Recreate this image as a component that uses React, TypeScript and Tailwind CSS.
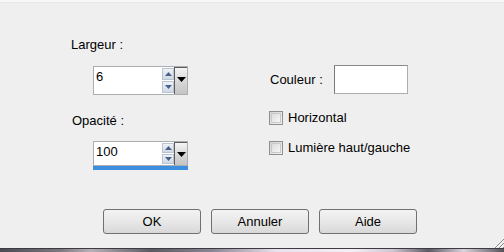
import React from "react";

const font = { fontFamily: '"Liberation Sans", Arial, sans-serif' };

function SpinBox({ value, focused }: { value: string; focused?: boolean }) {
  return (
    <div className="ml-[22px] flex h-[29px] w-[95px] flex-col">
      <div className="flex flex-1 items-stretch border border-[#abadb3] bg-white">
        <div className="flex-1 pl-[2px] pt-[2px] text-[13px] leading-[15px] text-black">{value}</div>
        {/* spinner arrows */}
        <div className="flex w-[12px] flex-col gap-[1px] py-[1px]">
          <div className="flex flex-1 items-center justify-center border border-[#b9c3d1] bg-gradient-to-b from-[#eef2f7] to-[#cfd8e4]">
            <svg width="7" height="4" viewBox="0 0 7 4">
              <path d="M0 4 L3.5 0 L7 4 Z" fill="#4b6089" />
            </svg>
          </div>
          <div className="flex flex-1 items-center justify-center border border-[#b9c3d1] bg-gradient-to-b from-[#eef2f7] to-[#cfd8e4]">
            <svg width="7" height="4" viewBox="0 0 7 4">
              <path d="M0 0 L7 0 L3.5 4 Z" fill="#4b6089" />
            </svg>
          </div>
        </div>
        {/* dropdown button */}
        <div className="flex w-[13px] flex-col items-center border-l border-t border-[#5e5e5e] bg-gradient-to-b from-[#f4f4f4] via-[#d9d9d9] to-[#c4c4c4] pt-[9px]">
          <svg width="9" height="5" viewBox="0 0 9 5">
            <path d="M0 0 L9 0 L4.5 5 Z" fill="#000" />
          </svg>
        </div>
      </div>
      {focused && <div className="h-[4px] bg-[#3c8fde]" />}
    </div>
  );
}

function CheckRow({ label }: { label: string }) {
  return (
    <div className="flex items-center">
      <div className="h-[14px] w-[14px] border border-[#8e8f8f] bg-gradient-to-br from-[#d4d4d4] to-[#f4f4f4] p-[1px]">
        <div className="h-full w-full border border-[#c9c9c9] bg-gradient-to-br from-[#dcdcdc] to-[#f7f7f7]" />
      </div>
      <span className="ml-[5px] text-[13px] leading-[15px] text-black">{label}</span>
    </div>
  );
}

function Btn({ label, w }: { label: string; w: string }) {
  return (
    <div
      className={`${w} flex h-[25px] items-center justify-center rounded-[3px] border border-[#707070] bg-gradient-to-b from-[#f3f3f3] via-[#e8e8e8] to-[#d8d8d8] text-[13px] text-black`}
    >
      {label}
    </div>
  );
}

export default function App() {
  return (
    <div style={font} className="relative flex h-[252px] w-[504px] flex-col overflow-hidden bg-[#efefef]">
      <div className="h-[3px] border-b border-[#e8e8e8] bg-[#f7f7f7]" />

      <div className="flex items-start pl-[71px] pt-[34px]">
        {/* left column */}
        <div className="flex w-[117px] flex-col">
          <span className="h-[15px] text-[13px] leading-[15px] text-black">Largeur :</span>
          <div className="mt-[14px]">
            <SpinBox value="6" />
          </div>
          <span className="mt-[18px] h-[15px] pl-[1px] text-[13px] leading-[15px] text-black">Opacité :</span>
          <div className="mt-[13px]">
            <SpinBox value="100" focused />
          </div>
        </div>

        {/* right column */}
        <div className="ml-[81px] mt-[28px] flex flex-col">
          <div className="flex items-center">
            <span className="w-[65px] pl-[1px] text-[13px] leading-[15px] text-black">Couleur :</span>
            <div className="h-[29px] w-[74px] border border-[#abadb3] border-l-[#7a7a7a] border-t-[#8a8a8a] bg-white" />
          </div>
          <div className="mt-[16px]">
            <CheckRow label="Horizontal" />
          </div>
          <div className="mt-[15px]">
            <CheckRow label="Lumière haut/gauche" />
          </div>
        </div>
      </div>

      <div className="mt-auto flex gap-[10px] pb-[14px] pl-[103px]">
        <Btn label="OK" w="w-[98px]" />
        <Btn label="Annuler" w="w-[98px]" />
        <Btn label="Aide" w="w-[98px]" />
      </div>

      <div className="h-[1px] bg-[#3b3b40]" />
      <div className="h-[3px] bg-[linear-gradient(90deg,#4a4a52_0%,#7d7880_12%,#b8b0b8_18%,#5a5a62_30%,#8a8594_42%,#e9e2ef_55%,#f4eef6_70%,#cfc6d2_78%,#5d5a63_85%,#d9d2dc_92%,#55525a_100%)]" />

      {/* resize grip */}
      <svg className="absolute bottom-[4px] right-0" width="10" height="10" viewBox="0 0 10 10">
        <path d="M10 1 L1 10 M10 5 L5 10 M10 9 L9 10" stroke="#8a8a8a" strokeWidth="1" />
      </svg>
    </div>
  );
}
